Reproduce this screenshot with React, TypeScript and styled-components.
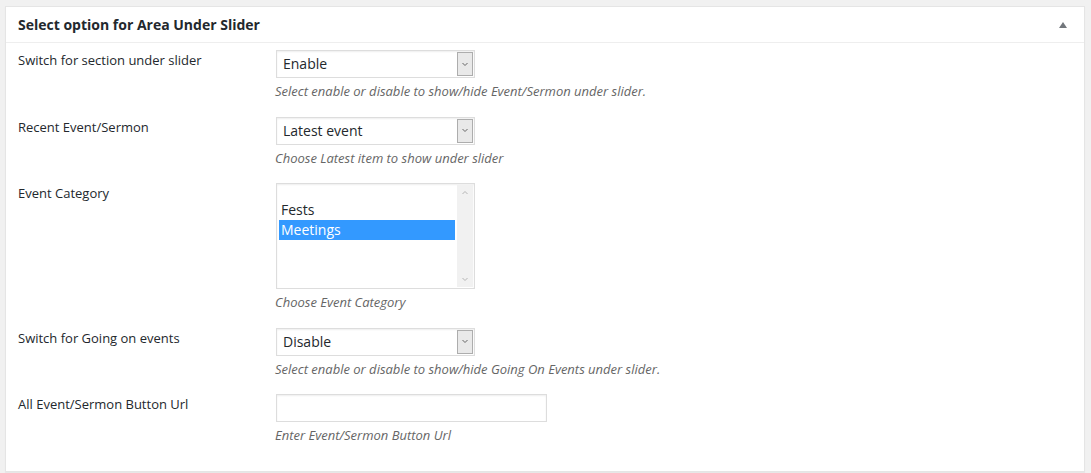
import React from "react";
import styled, { createGlobalStyle } from "styled-components";

const GlobalStyle = createGlobalStyle`
  html, body {
    margin: 0;
    padding: 0;
    background: #f1f1f1;
    font-family: "Open Sans", "Liberation Sans", sans-serif;
    color: #23282d;
  }
`;

const Page = styled.div`
  padding: 6px 6px 0 5px;
  width: 1091px;
  height: 473px;
  box-sizing: border-box;
`;

const Panel = styled.div`
  background: #fff;
  border: 1px solid #e5e5e5;
  box-shadow: 0 1px 1px rgba(0, 0, 0, 0.04);
  height: 466px;
  box-sizing: border-box;
`;

const Header = styled.div`
  display: flex;
  align-items: center;
  justify-content: space-between;
  height: 35px;
  padding: 0 12px 0 12px;
  border-bottom: 1px solid #eee;
  box-sizing: content-box;

  h2 {
    margin: 0;
    font-size: 14px;
    font-weight: 700;
    line-height: 20px;
    color: #23282d;
  }
`;

const Toggle = styled.div`
  width: 0;
  height: 0;
  margin-right: 5px;
  border-left: 4px solid transparent;
  border-right: 4px solid transparent;
  border-bottom: 6px solid #72777c;
`;

const Body = styled.div`
  padding: 7px 12px 0 12px;
`;

const Row = styled.div`
  display: grid;
  grid-template-columns: 258px 1fr;
  padding-bottom: 15.5px;
`;

const Label = styled.div`
  font-size: 13px;
  line-height: 20px;
  color: #23282d;
`;

const Field = styled.div`
  display: flex;
  flex-direction: column;
  align-items: flex-start;
`;

const SelectBox = styled.div`
  position: relative;
  width: 199px;
  height: 28px;
  box-sizing: border-box;
  border: 1px solid #ddd;
  box-shadow: inset 0 1px 2px rgba(0, 0, 0, 0.07);
  background: #fff;
  font-size: 14px;
  line-height: 26px;
  padding-left: 6px;
  color: #23282d;
`;

const ArrowButton = styled.div`
  position: absolute;
  top: 1px;
  right: 1px;
  bottom: 1px;
  width: 16px;
  background: #e9e9e9;
  border: 1px solid #adadad;
  box-sizing: border-box;
  display: flex;
  align-items: center;
  justify-content: center;
`;

const ListBox = styled.div`
  position: relative;
  width: 199px;
  height: 106px;
  box-sizing: border-box;
  border: 1px solid #ddd;
  box-shadow: inset 0 1px 2px rgba(0, 0, 0, 0.07);
  background: #fff;
  padding: 16px 19px 0 2px;
`;

const Option = styled.div<{ $selected?: boolean }>`
  font-size: 14px;
  line-height: 20px;
  padding-left: 2px;
  color: ${({ $selected }) => ($selected ? "#fff" : "#23282d")};
  background: ${({ $selected }) => ($selected ? "#3399ff" : "transparent")};
`;

const ScrollTrack = styled.div`
  position: absolute;
  top: 1px;
  right: 1px;
  bottom: 1px;
  width: 16px;
  background: #f1f1f1;
  display: flex;
  flex-direction: column;
  justify-content: space-between;
  align-items: center;
  padding: 5px 0;
  box-sizing: border-box;
`;

const TextInput = styled.div`
  width: 271px;
  height: 28px;
  box-sizing: border-box;
  border: 1px solid #ddd;
  box-shadow: inset 0 1px 2px rgba(0, 0, 0, 0.07);
  background: #fff;
`;

const Description = styled.p`
  margin: 3px 0 0 -1px;
  font-size: 13px;
  font-style: italic;
  line-height: 20px;
  color: #666;
`;

const Chevron = ({ up, color }: { up?: boolean; color: string }) => (
  <svg width="8" height="5" viewBox="0 0 8 5">
    <path
      d={up ? "M1.5 4 L4 1.5 L6.5 4" : "M1.5 1 L4 3.5 L6.5 1"}
      fill="none"
      stroke={color}
      strokeWidth="1"
    />
  </svg>
);

const Select = ({ value }: { value: string }) => (
  <SelectBox>
    {value}
    <ArrowButton>
      <Chevron color="#666" />
    </ArrowButton>
  </SelectBox>
);

export default function App() {
  return (
    <>
      <GlobalStyle />
      <Page>
        <Panel>
          <Header>
            <h2>Select option for Area Under Slider</h2>
            <Toggle />
          </Header>
          <Body>
            <Row>
              <Label>Switch for section under slider</Label>
              <Field>
                <Select value="Enable" />
                <Description>
                  Select enable or disable to show/hide Event/Sermon under slider.
                </Description>
              </Field>
            </Row>
            <Row>
              <Label>Recent Event/Sermon</Label>
              <Field>
                <Select value="Latest event" />
                <Description>Choose Latest item to show under slider</Description>
              </Field>
            </Row>
            <Row>
              <Label>Event Category</Label>
              <Field>
                <ListBox>
                  <Option>Fests</Option>
                  <Option $selected>Meetings</Option>
                  <ScrollTrack>
                    <Chevron up color="#b5b5b5" />
                    <Chevron color="#b5b5b5" />
                  </ScrollTrack>
                </ListBox>
                <Description>Choose Event Category</Description>
              </Field>
            </Row>
            <Row>
              <Label>Switch for Going on events</Label>
              <Field>
                <Select value="Disable" />
                <Description>
                  Select enable or disable to show/hide Going On Events under slider.
                </Description>
              </Field>
            </Row>
            <Row>
              <Label>All Event/Sermon Button Url</Label>
              <Field>
                <TextInput />
                <Description>Enter Event/Sermon Button Url</Description>
              </Field>
            </Row>
          </Body>
        </Panel>
      </Page>
    </>
  );
}
